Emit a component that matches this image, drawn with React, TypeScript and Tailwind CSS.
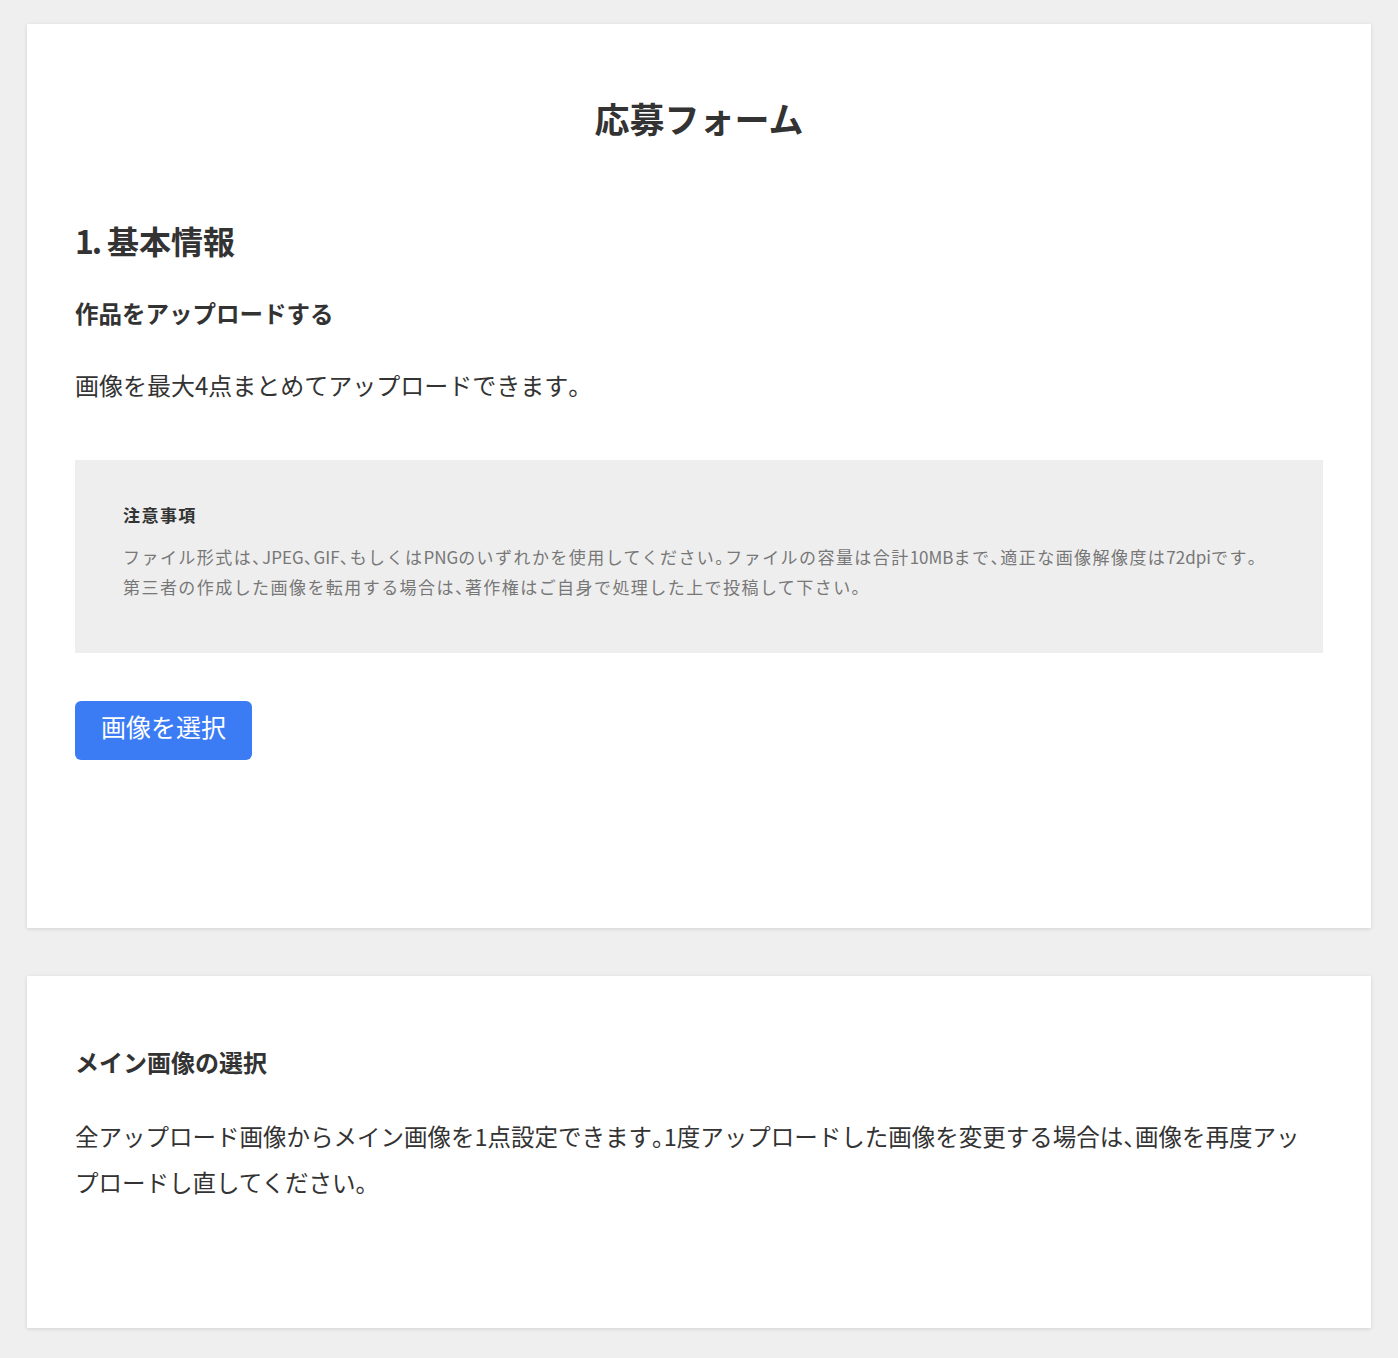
import { Fragment } from "react";

// 句読点は半角幅に詰め、英数字は字間を空けない
function Jp({ text }: { text: string }) {
  return (
    <>
      {text.split(/([、。]|[A-Za-z0-9]+)/).map((part, i) => {
        if (part === "、" || part === "。") {
          return (
            <span key={i} className="[font-feature-settings:'halt']">
              {part}
            </span>
          );
        }
        if (/^[A-Za-z0-9]+$/.test(part)) {
          return (
            <span key={i} className="tracking-normal">
              {part}
            </span>
          );
        }
        return <Fragment key={i}>{part}</Fragment>;
      })}
    </>
  );
}

export default function App() {
  return (
    <div
      className="min-h-screen bg-[#efefef] pt-6 pb-[30px] px-[27px] text-[#333]"
      style={{ fontFamily: '"Noto Sans CJK JP", "Noto Sans", sans-serif' }}
    >
      <section className="bg-white shadow-[0_1px_4px_rgba(0,0,0,0.12)] px-12 pt-[69px] pb-[168px]">
        <h1 className="text-center text-[35px] leading-[50px] font-bold">応募フォーム</h1>

        <h2 className="mt-[77px] text-[32px] leading-[40px] font-bold">
          <span className="tracking-[-0.07em]">1.</span> 基本情報
        </h2>

        <h3 className="mt-9 text-[23.5px] leading-[34px] font-bold">作品をアップロードする</h3>

        <p className="mt-[38px] text-[24px] leading-[34px]">
          <Jp text="画像を最大4点まとめてアップロードできます。" />
        </p>

        <div className="mt-[58px] bg-[#eeeeee] px-12 pt-[43px] pb-[51px] tracking-[0.09em]">
          <p className="text-[17px] leading-6 font-bold">注意事項</p>
          <p className="mt-[15px] text-[17px] leading-[30px] text-[#777]">
            <Jp text="ファイル形式は、JPEG、GIF、もしくはPNGのいずれかを使用してください。ファイルの容量は合計10MBまで、適正な画像解像度は72dpiです。" />
            <br />
            <Jp text="第三者の作成した画像を転用する場合は、著作権はご自身で処理した上で投稿して下さい。" />
          </p>
        </div>

        <button
          type="button"
          className="mt-12 h-[59px] px-[26px] pb-2 rounded-md bg-[#3b7cf5] text-white text-[25px] leading-none"
        >
          画像を選択
        </button>
      </section>

      <section className="mt-12 bg-white shadow-[0_1px_4px_rgba(0,0,0,0.12)] px-12 pt-[69px] pb-[123px]">
        <h3 className="text-[24px] leading-[34px] font-bold">メイン画像の選択</h3>
        <p className="mt-[34px] text-[23.5px] leading-[46px]">
          <Jp text="全アップロード画像からメイン画像を1点設定できます。1度アップロードした画像を変更する場合は、画像を再度アップロードし直してください。" />
        </p>
      </section>
    </div>
  );
}
